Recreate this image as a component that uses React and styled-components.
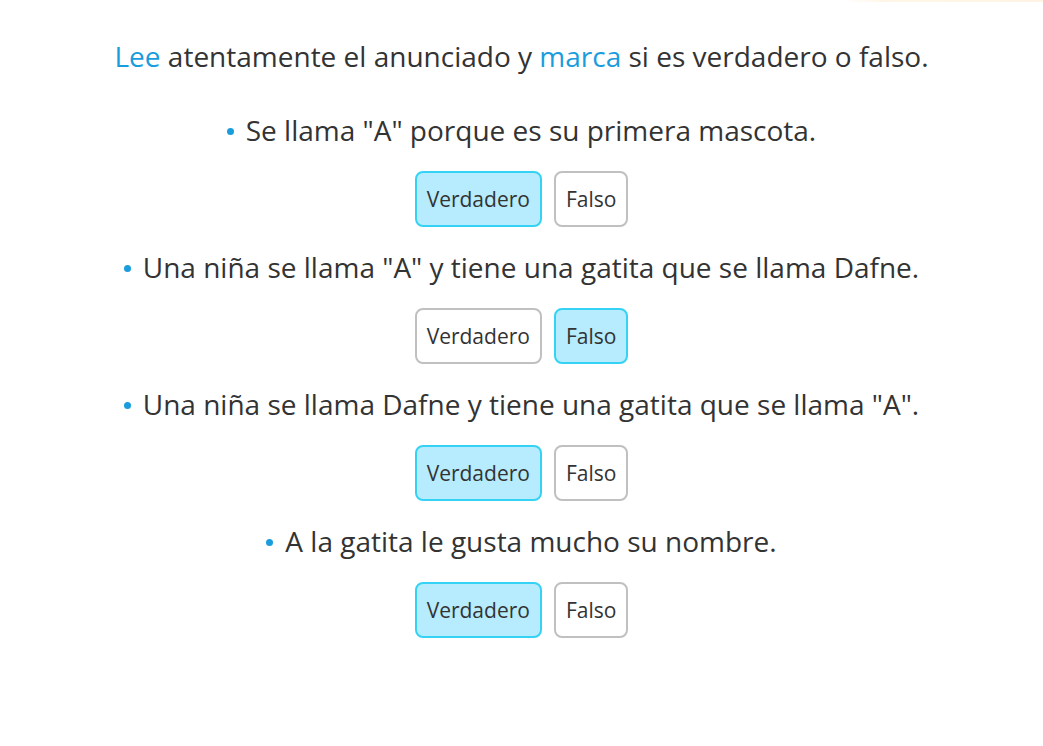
import React, { useState } from 'react';
import styled, { createGlobalStyle } from 'styled-components';

const GlobalStyle = createGlobalStyle`
  body {
    margin: 0;
    background: #ffffff;
    font-family: 'Open Sans', 'Noto Sans', sans-serif;
    color: #333333;
  }
`;

const items = [
  { text: 'Se llama "A" porque es su primera mascota.', answer: 'v' },
  { text: 'Una niña se llama "A" y tiene una gatita que se llama Dafne.', answer: 'f' },
  { text: 'Una niña se llama Dafne y tiene una gatita que se llama "A".', answer: 'v' },
  { text: 'A la gatita le gusta mucho su nombre.', answer: 'v' },
];

const App = () => {
  const [answers, setAnswers] = useState(items.map((i) => i.answer));

  const pick = (idx, value) => {
    setAnswers((prev) => prev.map((a, i) => (i === idx ? value : a)));
  };

  return (
    <Page>
      <GlobalStyle />
      <TopGlow />
      <Title>
        <Accent>Lee</Accent> atentamente el anunciado y <Accent>marca</Accent> si es verdadero o falso.
      </Title>
      <List>
        {items.map((item, idx) => (
          <Item key={idx}>
            <Statement>{item.text}</Statement>
            <Choices>
              <Choice $active={answers[idx] === 'v'} onClick={() => pick(idx, 'v')}>
                Verdadero
              </Choice>
              <Choice $active={answers[idx] === 'f'} onClick={() => pick(idx, 'f')}>
                Falso
              </Choice>
            </Choices>
          </Item>
        ))}
      </List>
    </Page>
  );
};

const Page = styled.div`
  min-height: 746px;
  display: flex;
  flex-direction: column;
  align-items: center;
  text-align: center;
`;

const TopGlow = styled.div`
  align-self: flex-end;
  width: 200px;
  height: 2px;
  background: linear-gradient(to right, rgba(255, 240, 220, 0), #fff6e8 20%, #fff4e4);
`;

const Title = styled.p`
  margin: 36px 0 38px;
  font-size: 28px;
  line-height: 36px;
`;

const Accent = styled.span`
  color: #1a9ddc;
`;

const List = styled.div`
  display: flex;
  flex-direction: column;
  gap: 22px;
`;

const Item = styled.div`
  display: flex;
  flex-direction: column;
  align-items: center;
  gap: 23px;
`;

const Statement = styled.p`
  margin: 0;
  font-size: 28px;
  line-height: 36px;

  &::before {
    content: '';
    display: inline-block;
    width: 7px;
    height: 7px;
    border-radius: 50%;
    background: #1a9ddc;
    margin-right: 12px;
    vertical-align: middle;
    position: relative;
    top: -2px;
  }
`;

const Choices = styled.div`
  display: flex;
  gap: 12px;
`;

const Choice = styled.button`
  height: 56px;
  padding: 0 10px;
  border-radius: 8px;
  border: 2px solid ${(p) => (p.$active ? '#34d3f5' : '#c0c0c0')};
  background: ${(p) => (p.$active ? '#b6ecfe' : '#ffffff')};
  font-family: 'Open Sans', 'Noto Sans', sans-serif;
  font-size: 21px;
  color: #333333;
  cursor: pointer;
`;

export default App;
